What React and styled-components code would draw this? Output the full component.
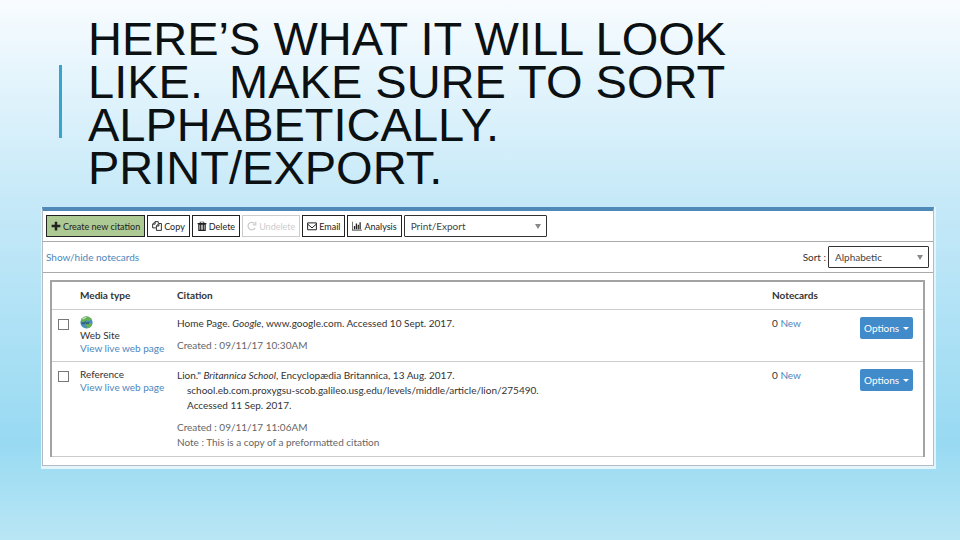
import React from 'react';
import styled, { createGlobalStyle, css } from 'styled-components';

const GlobalStyle = createGlobalStyle`
    * {
        box-sizing: border-box;
    }

    body {
        margin: 0;
    }
`;

const Slide = styled.main`
    min-height: 100vh;
    padding: 17px 24px 24px 41px;
    background: linear-gradient(#f8fcff 0%, #c6e9f8 37%, #98daf2 82%, #b9e6f5 100%);
    color: #333;
    font-family: Lato, 'Liberation Sans', sans-serif;
    font-size: 10px;
    line-height: 15px;
`;

const SlideHeader = styled.header`
    display: flex;
    align-items: center;
    gap: 26px;
    padding-left: 18px;
    margin-bottom: 18px;
`;

const Accent = styled.span`
    flex: none;
    width: 3px;
    height: 73px;
    margin-bottom: 4px;
    background: #35a5d0;
`;

const Title = styled.h1`
    max-width: 740px;
    margin: 0;
    color: #0b1012;
    font-family: 'Liberation Sans', Arial, sans-serif;
    font-size: 47px;
    font-weight: 400;
    line-height: 43px;
    text-transform: uppercase;
`;

const Frame = styled.section`
    padding: 0 2px 3px 1px;
    background: #e3f4fb;
`;

const Panel = styled.div`
    border: 1px solid #b4bcc2;
    border-top: 4px solid #4f89b7;
    background: #fff;
`;

const Toolbar = styled.div`
    display: flex;
    align-items: center;
    gap: 2px;
    height: 31px;
    padding: 0 3px;
    border-bottom: 1px solid #aaa;
`;

const ToolButton = styled.button`
    display: flex;
    align-items: center;
    gap: 2px;
    height: 22px;
    padding: 0 4px;
    border: 1px solid #222;
    background: ${({ $primary }) => ($primary ? '#adc994' : '#fff')};
    color: #222;
    font: inherit;
    font-size: 9px;
    white-space: nowrap;

    &:disabled {
        border-color: #ccc;
        color: #ccc;
    }
`;

const Icon = styled.svg`
    flex: none;
    width: 10px;
    height: 10px;
    fill: currentColor;
`;

const SelectBox = styled.span`
    position: relative;
    width: ${({ $wide }) => ($wide ? '143px' : '101px')};

    &::after {
        content: '';
        position: absolute;
        top: 9px;
        right: 6px;
        border: 3px solid transparent;
        border-top: 5px solid #888;
        border-bottom: 0;
        pointer-events: none;
    }
`;

const Select = styled.select`
    display: block;
    width: 100%;
    height: 22px;
    padding: 0 6px;
    border: 1px solid #333;
    border-radius: 1px;
    background: #fff;
    color: #444;
    font: inherit;
    appearance: none;
`;

const SubBar = styled.div`
    display: flex;
    align-items: center;
    justify-content: space-between;
    height: 31px;
    padding: 0 4px 0 3px;
    border-bottom: 1px solid #aaa;
`;

const SortField = styled.label`
    display: flex;
    align-items: center;
    gap: 2px;
`;

const Link = styled.a`
    color: #4d86bd;
    text-decoration: none;
`;

const TableArea = styled.div`
    padding: 7px 8px 8px 7px;
`;

const Table = styled.table`
    width: 100%;
    border: 2px solid #a3a3a3;
    border-bottom: 1px solid #bbb;
    border-collapse: collapse;
    table-layout: fixed;
`;

const cell = css`
    padding: 6px 0;
    border-bottom: 1px solid #ccc;
    text-align: left;
    vertical-align: top;
`;

const HeadCell = styled.th`
    ${cell}
    width: ${({ $width }) => $width || 'auto'};
    font-weight: 700;
`;

const Cell = styled.td`
    ${cell}
`;

const Checkbox = styled.input`
    display: block;
    width: 11px;
    height: 11px;
    margin: 3px 0 0 6px;
    border: 1px solid #777;
    background: #fff;
    appearance: none;
`;

const MediaType = styled.div`
    line-height: 13px;
`;

const Globe = styled.svg`
    display: block;
    width: 13px;
    height: 13px;
`;

const Citation = styled.p`
    margin: 0;
    padding-left: 10px;
    text-indent: -10px;
`;

const Meta = styled.p`
    margin: 7px 0 0;
    color: #666;
`;

const OptionsButton = styled.button`
    display: flex;
    align-items: center;
    gap: 4px;
    height: 22px;
    margin-top: 1px;
    padding: 0 4px;
    border: 0;
    border-radius: 2px;
    background: #428bca;
    color: #fff;
    font: inherit;

    &::after {
        content: '';
        border: 3px solid transparent;
        border-top-color: #fff;
        border-bottom: 0;
    }
`;

const icons = {
    plus: <path d="M6 1h4v5h5v4h-5v5H6v-5H1V6h5z" />,
    copy: (
        <path
            d="M6 11H1V5l4-4h5v3M1 5h4V1M7 8l4-4h4v11H7zM7 8h4V4"
            fill="none"
            stroke="currentColor"
            strokeWidth="1.5"
        />
    ),
    trash: (
        <path
            fillRule="evenodd"
            d="M5 1h6l1 2h3v2h-1v11H2V5H1V3h3zM6 2L5.500 3h5L10 2zM4 6v8h1V6zm3 0v8h2V6zm4 0v8h1V6z"
        />
    ),
    repeat: (
        <path
            d="M13 11a6 6 0 1 1-1-7M14 1v5H9"
            fill="none"
            stroke="currentColor"
            strokeWidth="2"
        />
    ),
    envelope: (
        <path
            d="M1 3h14v11H1zM1 5l7 6 7-6"
            fill="none"
            stroke="currentColor"
            strokeWidth="1.6"
        />
    ),
    chart: <path d="M0 1h1v13h15v1H0zM3 8h2v5H3zM6 4h2v9H6zM9 6h2v7H9zM12 2h2v11h-2z" />,
};

const tools = [
    { label: 'Create new citation', icon: 'plus', primary: true },
    { label: 'Copy', icon: 'copy' },
    { label: 'Delete', icon: 'trash' },
    { label: 'Undelete', icon: 'repeat', disabled: true },
    { label: 'Email', icon: 'envelope' },
    { label: 'Analysis', icon: 'chart' },
];

const citations = [
    {
        type: 'Web Site',
        web: true,
        text: (
            <>
                Home Page. <em>Google</em>, www.google.com. Accessed 10 Sept. 2017.
            </>
        ),
        meta: ['Created : 09/11/17 10:30AM'],
    },
    {
        type: 'Reference',
        text: (
            <>
                Lion." <em>Britannica School</em>, Encyclopædia Britannica, 13 Aug. 2017.
                <br />
                <span>school.eb.com.proxygsu-scob.galileo.usg.edu/levels/middle/article/lion/275490.</span>
                <br />
                Accessed 11 Sep. 2017.
            </>
        ),
        meta: ['Created : 09/11/17 11:06AM', 'Note : This is a copy of a preformatted citation'],
    },
];

const GlobeIcon = () => (
    <Globe viewBox="0 0 16 16" aria-hidden="true">
        <circle cx="8" cy="8" r="7.500" fill="#4a91bd" />
        <path d="M2 3Q6-1 11 1l3 3-3 2-4-1-2 3-4-1zM7 10l4-1 4 1q-2 5-6 5z" fill="#68b24b" />
        <path d="M2 4q3-4 7-3L5 4z" fill="#b7dfdc" />
        <path d="M2 7l1 3 1-2 1 2 1-3M7 7l1 3 1-2 1 2 1-3" fill="none" stroke="#28546d" />
    </Globe>
);

const CitationRow = ({ citation }) => (
    <tr>
        <Cell>
            <Checkbox type="checkbox" aria-label={`Select ${citation.type}`} />
        </Cell>
        <Cell>
            <MediaType>
                {citation.web && <GlobeIcon />}
                {citation.type}
                <br />
                <Link href="#live">View live web page</Link>
            </MediaType>
        </Cell>
        <Cell>
            <Citation>{citation.text}</Citation>
            <Meta>
                {citation.meta.map((line, index) => (
                    <React.Fragment key={line}>
                        {index > 0 && <br />}
                        {line}
                    </React.Fragment>
                ))}
            </Meta>
        </Cell>
        <Cell>
            0 <Link href="#new">New</Link>
        </Cell>
        <Cell>
            <OptionsButton type="button">Options</OptionsButton>
        </Cell>
    </tr>
);

const App = () => (
    <>
        <GlobalStyle />
        <Slide>
            <SlideHeader>
                <Accent />
                <Title>Here’s what it will look like.&nbsp; Make sure to sort alphabetically. Print/Export.</Title>
            </SlideHeader>
            <Frame>
                <Panel>
                    <Toolbar>
                        {tools.map(({ label, icon, primary, disabled }) => (
                            <ToolButton key={label} type="button" $primary={primary} disabled={disabled}>
                                <Icon viewBox="0 0 16 16" aria-hidden="true">
                                    {icons[icon]}
                                </Icon>
                                {label}
                            </ToolButton>
                        ))}
                        <SelectBox $wide>
                            <Select aria-label="Print/Export">
                                <option>Print/Export</option>
                            </Select>
                        </SelectBox>
                    </Toolbar>
                    <SubBar>
                        <Link href="#notecards">Show/hide notecards</Link>
                        <SortField>
                            Sort :
                            <SelectBox>
                                <Select>
                                    <option>Alphabetic</option>
                                </Select>
                            </SelectBox>
                        </SortField>
                    </SubBar>
                    <TableArea>
                        <Table>
                            <thead>
                                <tr>
                                    <HeadCell $width="29px" />
                                    <HeadCell $width="97px">Media type</HeadCell>
                                    <HeadCell>Citation</HeadCell>
                                    <HeadCell $width="88px">Notecards</HeadCell>
                                    <HeadCell $width="64px" />
                                </tr>
                            </thead>
                            <tbody>
                                {citations.map((citation) => (
                                    <CitationRow key={citation.type} citation={citation} />
                                ))}
                            </tbody>
                        </Table>
                    </TableArea>
                </Panel>
            </Frame>
        </Slide>
    </>
);

export default App;
